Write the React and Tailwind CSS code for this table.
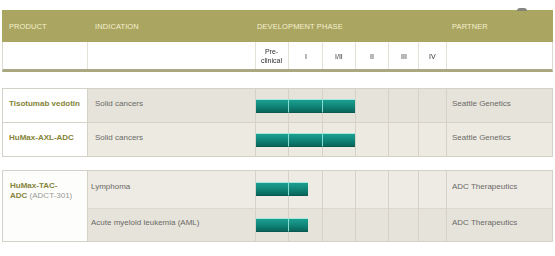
import React from 'react';

const grid = 'grid grid-cols-[85px_168px_33px_34px_33px_33px_30px_28px_105px]';

const Segment = ({ kind }) => {
  if (!kind) return null;
  const base =
    'h-[14px] bg-linear-to-b from-[#1b9f8f] via-[#11867a] to-[#0a655b] border-t border-t-[#a6e8e0] border-b border-b-[#0a5a51]';
  if (kind === 'mid') return <div className={`${base} -mr-px border-r border-r-[#86dcd1]`} />;
  if (kind === 'end') return <div className={base} />;
  return <div className={`${base} w-[19px]`} />;
};

const Row = ({ bg, pt, h, indication, partner, bars, indent, border }) => (
  <>
    <div className={`${bg} ${pt} ${h} ${indent} ${border} border-r border-[#d6d2c8] text-[8px] leading-[10px] text-[#6a6a66]`}>
      {indication}
    </div>
    {bars.map((b, i) => (
      <div key={i} className={`${bg} ${pt} ${h} ${border} border-r border-[#d6d2c8]`}>
        <Segment kind={b} />
      </div>
    ))}
    <div className={`${bg} ${pt} ${h} ${border} pl-[5px] text-[8px] leading-[10px] text-[#6a6a66]`}>{partner}</div>
  </>
);

const App = () => {
  return (
    <div className="relative w-[555px] h-[256px] bg-white pt-[10px] font-['Liberation_Sans',Arial,sans-serif]">
      <div className="absolute left-[517px] top-[8px] w-[10px] h-[3px] rounded-t-full bg-[#85857f]" />

      <div className="ml-[2px] w-[551px]">
        {/* header */}
        <div className={`${grid} h-[32px] items-center bg-[#aba562] border-x border-[#aba562] pt-[2px] text-[7.5px] text-[#f4f0cc] tracking-[0.1px]`}>
          <div className="pl-[6px]">PRODUCT</div>
          <div className="pl-[7px]">INDICATION</div>
          <div className="col-span-6 pl-[1px]">DEVELOPMENT PHASE</div>
          <div className="pl-[5px]">PARTNER</div>
        </div>

        {/* phase labels */}
        <div className={`${grid} h-[30px] bg-white border-x border-[#dcd9d1] border-b-[3px] border-b-[#a9a880] text-[7px] leading-[9px] text-[#2f2f2c]`}>
          <div className="border-r border-[#e4e1d9]" />
          <div className="border-r border-[#e4e1d9]" />
          <div className="border-r border-[#e4e1d9] flex items-center justify-center text-center pt-[1px]">
            <span className="will-change-transform">
              Pre-
              <br />
              clinical
            </span>
          </div>
          {['I', 'I/II', 'II', 'III', 'IV'].map((p) => (
            <div key={p} className="border-r border-[#e4e1d9] flex items-center justify-center pt-[2px]">
              <span className="will-change-transform">{p}</span>
            </div>
          ))}
          <div />
        </div>

        {/* ADC group 1 */}
        <div className={`${grid} mt-[16px] border border-[#d4d1c9]`}>
          <div className="h-[34px] pt-[10px] pl-[6px] bg-white border-r border-b border-[#d6d2c8] text-[8px] leading-[10px] font-bold text-[#858339]">
            Tisotumab vedotin
          </div>
          <Row
            bg="bg-[#e6e3da]"
            pt="pt-[10px]"
            h="h-[34px]"
            border="border-b border-b-[#d6d2c8]"
            indent="pl-[7px]"
            indication="Solid cancers"
            partner="Seattle Genetics"
            bars={['mid', 'mid', 'end', null, null, null]}
          />
          <div className="h-[33px] pt-[10px] pl-[6px] bg-white border-r border-[#d6d2c8] text-[8px] leading-[10px] font-bold text-[#858339]">
            HuMax-AXL-ADC
          </div>
          <Row
            bg="bg-[#edeae2]"
            pt="pt-[10px]"
            h="h-[33px]"
            border=""
            indent="pl-[7px]"
            indication="Solid cancers"
            partner="Seattle Genetics"
            bars={['mid', 'mid', 'end', null, null, null]}
          />
        </div>

        {/* ADC group 2 */}
        <div className={`${grid} mt-[13px] border border-[#d4d1c9]`}>
          <div className="row-span-2 pt-[10px] pl-[7px] bg-[#fdfdfb] border-r border-[#d6d2c8] text-[8px] leading-[10px]">
            <span className="font-bold text-[#858339]">
              HuMax-TAC-
              <br />
              ADC
            </span>{' '}
            <span className="text-[#9a9a96]">(ADCT-301)</span>
          </div>
          <Row
            bg="bg-[#eeebe4]"
            pt="pt-[11px]"
            h="h-[38px]"
            border="border-b border-b-[#dcd8ce]"
            indent="pl-[3px]"
            indication="Lymphoma"
            partner="ADC Therapeutics"
            bars={['mid', 'part', null, null, null, null]}
          />
          <Row
            bg="bg-[#e6e3db]"
            pt="pt-[9px]"
            h="h-[32px]"
            border=""
            indent="pl-[3px]"
            indication="Acute myeloid leukemia (AML)"
            partner="ADC Therapeutics"
            bars={['mid', 'part', null, null, null, null]}
          />
        </div>
      </div>
    </div>
  );
};

export default App;
